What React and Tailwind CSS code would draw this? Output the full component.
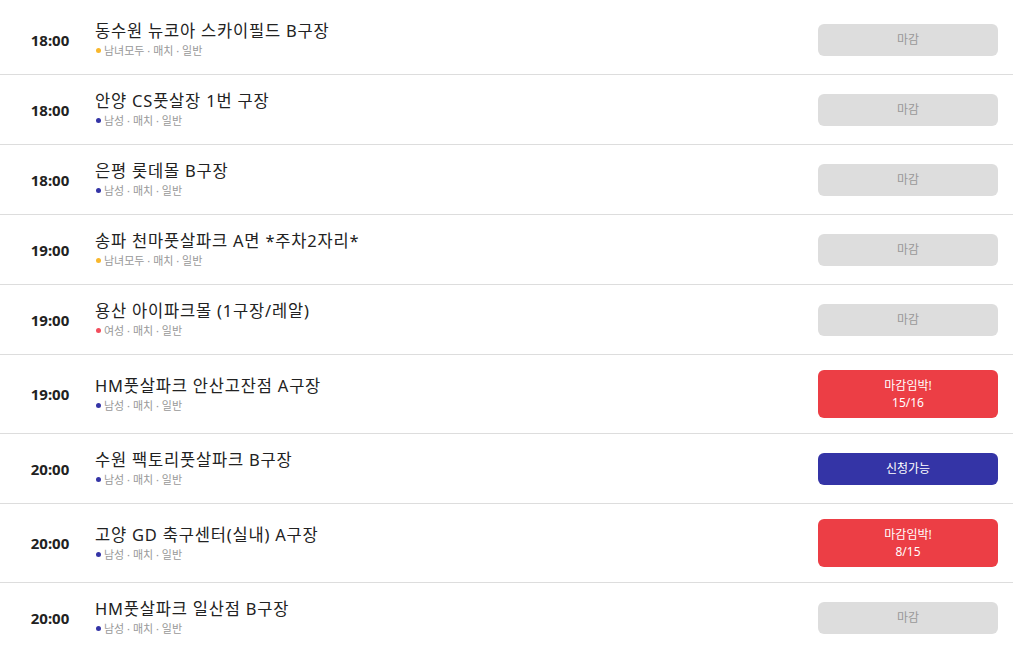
const matches = [
  { time: '18:00', title: '동수원 뉴코아 스카이필드 B구장', gender: '남녀모두', status: 'closed' },
  { time: '18:00', title: '안양 CS풋살장 1번 구장', gender: '남성', status: 'closed' },
  { time: '18:00', title: '은평 롯데몰 B구장', gender: '남성', status: 'closed' },
  { time: '19:00', title: '송파 천마풋살파크 A면 *주차2자리*', gender: '남녀모두', status: 'closed' },
  { time: '19:00', title: '용산 아이파크몰 (1구장/레알)', gender: '여성', status: 'closed' },
  { time: '19:00', title: 'HM풋살파크 안산고잔점 A구장', gender: '남성', status: 'hurry', count: '15/16' },
  { time: '20:00', title: '수원 팩토리풋살파크 B구장', gender: '남성', status: 'open' },
  { time: '20:00', title: '고양 GD 축구센터(실내) A구장', gender: '남성', status: 'hurry', count: '8/15' },
  { time: '20:00', title: 'HM풋살파크 일산점 B구장', gender: '남성', status: 'closed' },
]

const dotColor = {
  남녀모두: 'bg-[#f8b72c]',
  남성: 'bg-[#3434a6]',
  여성: 'bg-[#f24d5c]',
}

function StatusButton({ status, count }) {
  if (status === 'hurry') {
    return (
      <button className="flex h-12 w-[180px] flex-col items-center justify-center rounded-md bg-[#ec3e45] text-[12px] leading-[17px] text-white">
        <span>마감임박!</span>
        <span>{count}</span>
      </button>
    )
  }
  if (status === 'open') {
    return (
      <button className="h-8 w-[180px] rounded-md bg-[#3434a6] text-[12px] text-white">
        신청가능
      </button>
    )
  }
  return (
    <button className="h-8 w-[180px] rounded-md bg-[#dddddd] text-[12px] text-[#999999]">
      마감
    </button>
  )
}

export default function App() {
  return (
    <div className="min-h-screen bg-white pt-[5px] font-['Noto_Sans','Noto_Sans_CJK_KR',sans-serif] text-[#222222]">
      <ul>
        {matches.map((m, i) => (
          <li
            key={i}
            className={`flex items-center py-[15px] pl-5 pr-[15px] ${i < matches.length - 1 ? 'border-b border-[#dddddd]' : ''}`}
          >
            <div className="w-[60px] shrink-0 text-center text-[15px] font-bold leading-5">{m.time}</div>
            <div className="ml-[15px] flex min-h-[39px] flex-1 flex-col justify-center">
              <p className="text-[16.5px] leading-[22px] tracking-[0.8px]">{m.title}</p>
              <p className="flex items-center text-[11px] leading-[17px] text-[#999999]">
                <span className={`mr-[3px] ml-[1px] inline-block h-[5px] w-[5px] rounded-full ${dotColor[m.gender]}`} />
                {m.gender} · 매치 · 일반
              </p>
            </div>
            <StatusButton status={m.status} count={m.count} />
          </li>
        ))}
      </ul>
    </div>
  )
}
